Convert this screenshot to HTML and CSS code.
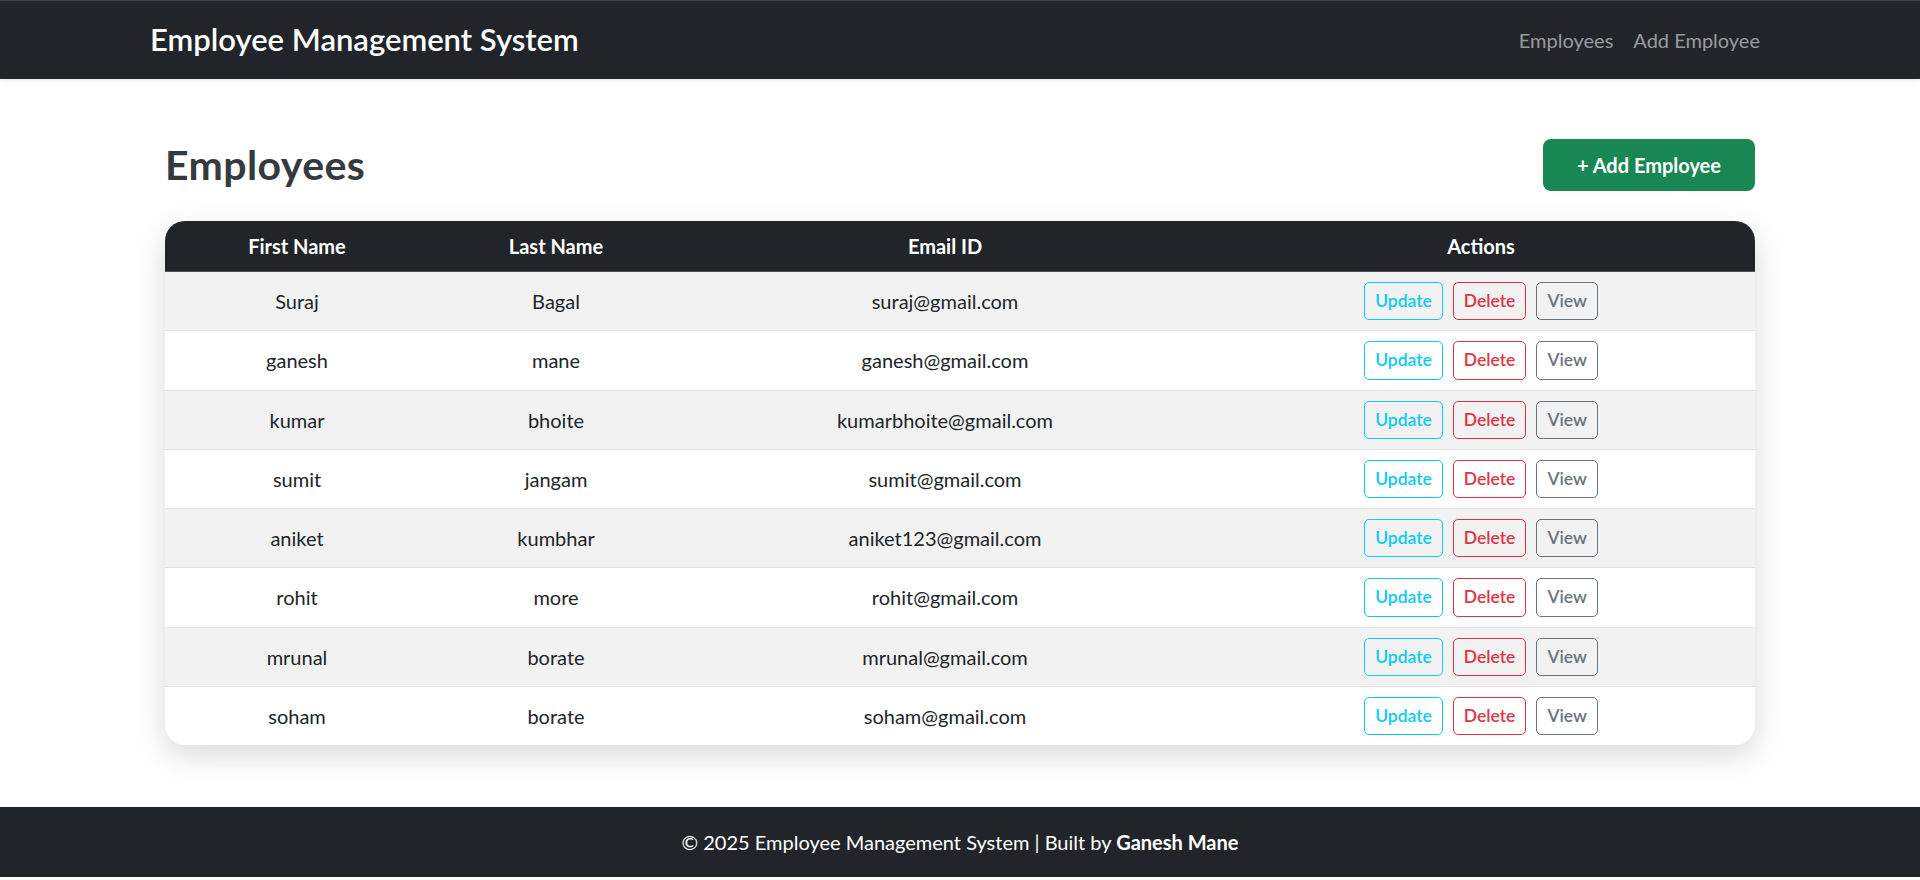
FILE: index.html
```html
<!DOCTYPE html>
<html lang="en">
<head>
<meta charset="utf-8">
<title>Employee Management System</title>
<link rel="stylesheet" href="styles.css">
</head>
<body>
<header class="navbar">
  <div class="nav-inner">
    <a class="brand" href="#">Employee Management System</a>
    <nav class="nav-links">
      <a href="#">Employees</a>
      <a href="#">Add Employee</a>
    </nav>
  </div>
</header>

<main class="main">
  <div class="page-head">
    <h2 class="title">Employees</h2>
    <a class="btn-add" href="#">+ Add Employee</a>
  </div>

  <div class="table-card">
    <table class="emp-table">
      <colgroup>
        <col class="c1"><col class="c2"><col class="c3"><col class="c4">
      </colgroup>
      <thead>
        <tr><th>First Name</th><th>Last Name</th><th>Email ID</th><th>Actions</th></tr>
      </thead>
      <tbody>
        <tr><td>Suraj</td><td>Bagal</td><td>suraj@gmail.com</td><td><div class="actions"><button class="b b-info">Update</button><button class="b b-danger">Delete</button><button class="b b-sec">View</button></div></td></tr>
        <tr><td>ganesh</td><td>mane</td><td>ganesh@gmail.com</td><td><div class="actions"><button class="b b-info">Update</button><button class="b b-danger">Delete</button><button class="b b-sec">View</button></div></td></tr>
        <tr><td>kumar</td><td>bhoite</td><td>kumarbhoite@gmail.com</td><td><div class="actions"><button class="b b-info">Update</button><button class="b b-danger">Delete</button><button class="b b-sec">View</button></div></td></tr>
        <tr><td>sumit</td><td>jangam</td><td>sumit@gmail.com</td><td><div class="actions"><button class="b b-info">Update</button><button class="b b-danger">Delete</button><button class="b b-sec">View</button></div></td></tr>
        <tr><td>aniket</td><td>kumbhar</td><td>aniket123@gmail.com</td><td><div class="actions"><button class="b b-info">Update</button><button class="b b-danger">Delete</button><button class="b b-sec">View</button></div></td></tr>
        <tr><td>rohit</td><td>more</td><td>rohit@gmail.com</td><td><div class="actions"><button class="b b-info">Update</button><button class="b b-danger">Delete</button><button class="b b-sec">View</button></div></td></tr>
        <tr><td>mrunal</td><td>borate</td><td>mrunal@gmail.com</td><td><div class="actions"><button class="b b-info">Update</button><button class="b b-danger">Delete</button><button class="b b-sec">View</button></div></td></tr>
        <tr><td>soham</td><td>borate</td><td>soham@gmail.com</td><td><div class="actions"><button class="b b-info">Update</button><button class="b b-danger">Delete</button><button class="b b-sec">View</button></div></td></tr>
      </tbody>
    </table>
  </div>
</main>

<footer class="footer">
  © 2025 Employee Management System | Built by <strong>Ganesh Mane</strong>
</footer>
</body>
</html>
```

FILE: styles.css
```css
* { box-sizing: border-box; }

html, body {
  margin: 0;
  padding: 0;
  background: #fff;
}

body {
  font-family: "Segoe UI", Lato, "Noto Sans", sans-serif;
  font-size: 20px;
  line-height: 1.5;
  color: #212529;
}

a { text-decoration: none; }

.navbar {
  height: 79px;
  background: #212529;
  border-top: 1px solid #45463f;
  box-shadow: 0 2px 4px rgba(0, 0, 0, 0.08);
}

.nav-inner {
  width: 1620px;
  height: 100%;
  margin: 0 auto;
  display: flex;
  align-items: center;
  justify-content: space-between;
}

.brand {
  color: #fff;
  font-size: 31px;
  font-weight: 600;
  line-height: 1.2;
}

.nav-links {
  display: flex;
}

.nav-links a {
  color: rgba(255, 255, 255, 0.55);
  font-size: 20px;
  padding: 0 10px;
}

.main {
  width: 1590px;
  margin: 60px auto 0;
}

.page-head {
  display: flex;
  align-items: center;
  justify-content: space-between;
  height: 52px;
  margin-bottom: 30px;
}

.title {
  margin: 0;
  font-size: 41px;
  font-weight: 700;
  letter-spacing: 0.4px;
  line-height: 1.2;
  color: #343a40;
}

.btn-add {
  display: inline-block;
  background: #198754;
  color: #fff;
  font-size: 20px;
  font-weight: 700;
  line-height: 30px;
  padding: 11px 34px;
  border-radius: 8px;
}

.table-card {
  border-radius: 20px;
  overflow: hidden;
  background: #fff;
  box-shadow: 0 10px 30px rgba(0, 0, 0, 0.15);
}

.emp-table {
  width: 100%;
  border-collapse: collapse;
  table-layout: fixed;
}

.c1 { width: 264px; }
.c2 { width: 254px; }
.c3 { width: 524px; }
.c4 { width: 548px; }

.emp-table th {
  background: #212529;
  color: #fff;
  font-weight: 700;
  text-align: center;
  padding: 10px;
  line-height: 30px;
  border-bottom: 1px solid #4d5154;
}

.emp-table td {
  text-align: center;
  vertical-align: middle;
  padding: 10px;
  line-height: 30px;
  border-bottom: 1px solid #dee2e6;
}

.emp-table tbody tr:nth-child(odd) td {
  background: #f2f2f2;
}

.emp-table tbody tr:last-child td {
  border-bottom: none;
}

.actions {
  display: flex;
  justify-content: center;
  gap: 10px;
}

.b {
  font-family: inherit;
  font-size: 17.5px;
  font-weight: 600;
  line-height: 26.25px;
  padding: 5px 10px;
  background: transparent;
  border: 1px solid;
  border-radius: 5px;
  cursor: pointer;
}

.b-info { color: #0dcaf0; border-color: #0dcaf0; }
.b-danger { color: #dc3545; border-color: #dc3545; }
.b-sec { color: #6c757d; border-color: #6c757d; }

.footer {
  margin-top: 62px;
  margin-bottom: 4px;
  background: #212529;
  color: #fff;
  text-align: center;
  font-size: 20px;
  line-height: 30px;
  padding: 20px 0;
}

.footer strong { font-weight: 700; }
```
